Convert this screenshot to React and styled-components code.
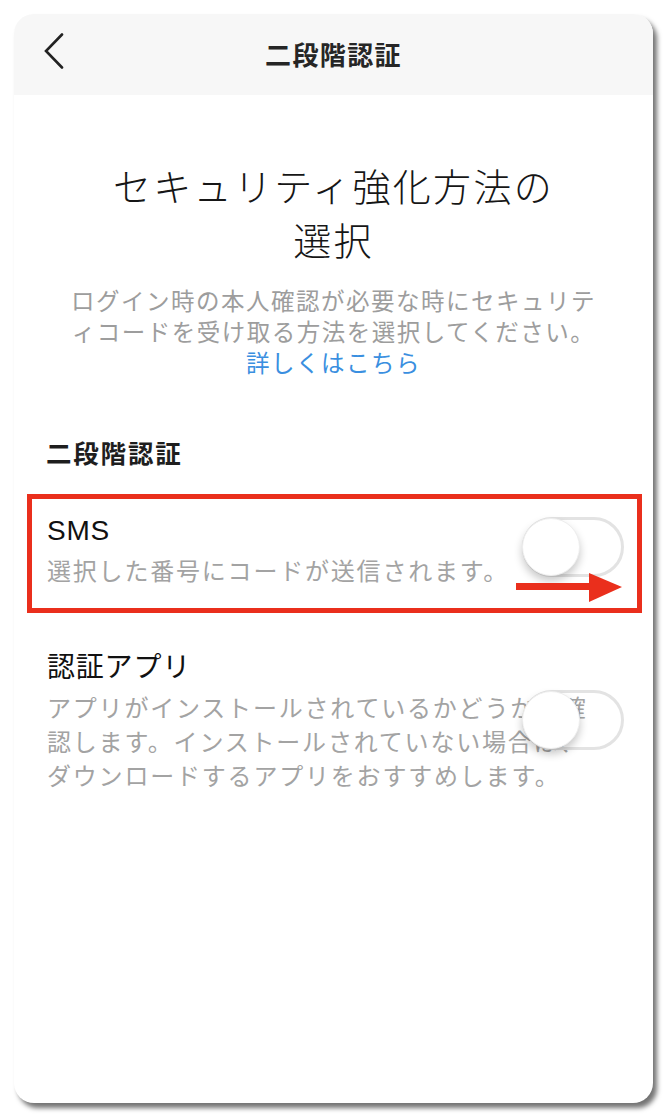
import React from "react";
import styled, { createGlobalStyle } from "styled-components";

const GlobalStyle = createGlobalStyle`
  html, body {
    margin: 0;
    padding: 0;
    background: #ffffff;
  }
  body {
    font-family: "Noto Sans CJK JP", "Liberation Sans", sans-serif;
    -webkit-font-smoothing: antialiased;
  }
`;

const Page = styled.div`
  width: 668px;
  height: 1117px;
  padding: 14px 0 0 14px;
  box-sizing: border-box;
`;

const Card = styled.div`
  width: 639px;
  height: 1089px;
  background: #ffffff;
  border-radius: 20px;
  box-shadow: 4px 5px 5px rgba(0, 0, 0, 0.55);
  overflow: hidden;
  display: flex;
  flex-direction: column;
`;

const Header = styled.header`
  height: 81px;
  flex: none;
  background: #f7f7f7;
  display: grid;
  grid-template-columns: 1fr auto 1fr;
  align-items: center;
  padding: 0 30px;
`;

const BackButton = styled.button`
  justify-self: start;
  border: 0;
  background: none;
  padding: 0;
  margin-top: -7px;
  display: flex;
  cursor: pointer;
`;

const HeaderTitle = styled.h1`
  margin: 0;
  font-size: 26px;
  font-weight: 700;
  letter-spacing: 1.4px;
  color: #262626;
  line-height: 1;
  margin-top: -2px;
`;

const Intro = styled.section`
  padding: 63px 32px 0;
  text-align: center;
`;

const MainTitle = styled.h2`
  margin: 0;
  font-size: 38px;
  font-weight: 300;
  line-height: 54px;
  letter-spacing: 2.3px;
  color: #161616;
`;

const Description = styled.p`
  margin: 19px 0 0;
  font-size: 23.5px;
  line-height: 31px;
  letter-spacing: 1.5px;
  color: #9d9d9d;
`;

const MoreLink = styled.a`
  display: block;
  color: #3a8fe0;
  text-decoration: none;
`;

const SectionLabel = styled.h3`
  margin: 56px 0 6px;
  padding-left: 32px;
  font-size: 25.5px;
  font-weight: 700;
  line-height: 36px;
  letter-spacing: 1.8px;
  color: #1e1e1e;
`;

const Row = styled.div`
  position: relative;
  padding: ${(p) => (p.$first ? 36 : 32)}px 29px 30px 33px;
`;

const RowTitle = styled.div`
  font-family: "Liberation Sans", "Noto Sans CJK JP", sans-serif;
  font-size: 28px;
  line-height: 38px;
  letter-spacing: 0.8px;
  color: #111111;
`;

const RowText = styled.div`
  margin-top: 3px;
  font-size: 24px;
  line-height: 34px;
  letter-spacing: 1.8px;
  color: #a3a3a3;
`;

const Track = styled.div`
  position: absolute;
  right: 29px;
  top: 50%;
  transform: translateY(-50%);
  width: 102px;
  height: 60px;
  box-sizing: border-box;
  border: 3px solid #e3e3e3;
  border-radius: 30px;
  background: ${(p) => (p.$on ? "#3897f0" : "transparent")};
`;

const Knob = styled.div`
  position: absolute;
  left: -3px;
  top: -2px;
  width: 58px;
  height: 58px;
  border-radius: 50%;
  background: #ffffff;
  border: 1px solid #eeeeee;
  box-sizing: border-box;
  box-shadow: 0 5px 9px rgba(0, 0, 0, 0.22);
`;

const Highlight = styled.div`
  position: absolute;
  left: 13px;
  right: 11px;
  top: 18px;
  bottom: 4px;
  border: 5px solid #ea2f1c;
  pointer-events: none;
`;

const ArrowMark = styled.svg`
  position: absolute;
  left: 486px;
  top: 94px;
  pointer-events: none;
`;

function Toggle({ on }) {
  return (
    <Track $on={on}>
      <Knob />
    </Track>
  );
}

export default function App() {
  return (
    <>
      <GlobalStyle />
      <Page>
        <Card>
          <Header>
            <BackButton aria-label="戻る">
              <svg width="20" height="36" viewBox="0 0 20 36">
                <polyline
                  points="18,1.5 2,18 18,34.5"
                  fill="none"
                  stroke="#222"
                  strokeWidth="2.6"
                  strokeLinecap="round"
                  strokeLinejoin="miter"
                />
              </svg>
            </BackButton>
            <HeaderTitle>二段階認証</HeaderTitle>
            <span />
          </Header>

          <Intro>
            <MainTitle>
              セキュリティ強化方法の
              <br />
              選択
            </MainTitle>
            <Description>
              ログイン時の本人確認が必要な時にセキュリテ
              <br />
              ィコードを受け取る方法を選択してください。
              <MoreLink href="#">詳しくはこちら</MoreLink>
            </Description>
          </Intro>

          <SectionLabel>二段階認証</SectionLabel>

          <Row $first>
            <RowTitle>SMS</RowTitle>
            <RowText>選択した番号にコードが送信されます。</RowText>
            <Toggle on={false} />
            <Highlight />
            <ArrowMark width="126" height="34" viewBox="0 0 126 34">
              <rect x="16" y="13" width="76" height="7" fill="#ea2f1c" />
              <polygon points="89,3 122,17 89,32" fill="#ea2f1c" />
            </ArrowMark>
          </Row>

          <Row>
            <RowTitle>認証アプリ</RowTitle>
            <RowText>
              アプリがインストールされているかどうかを確
              <br />
              認します。インストールされていない場合は、
              <br />
              ダウンロードするアプリをおすすめします。
            </RowText>
            <Toggle on={false} />
          </Row>
        </Card>
      </Page>
    </>
  );
}
